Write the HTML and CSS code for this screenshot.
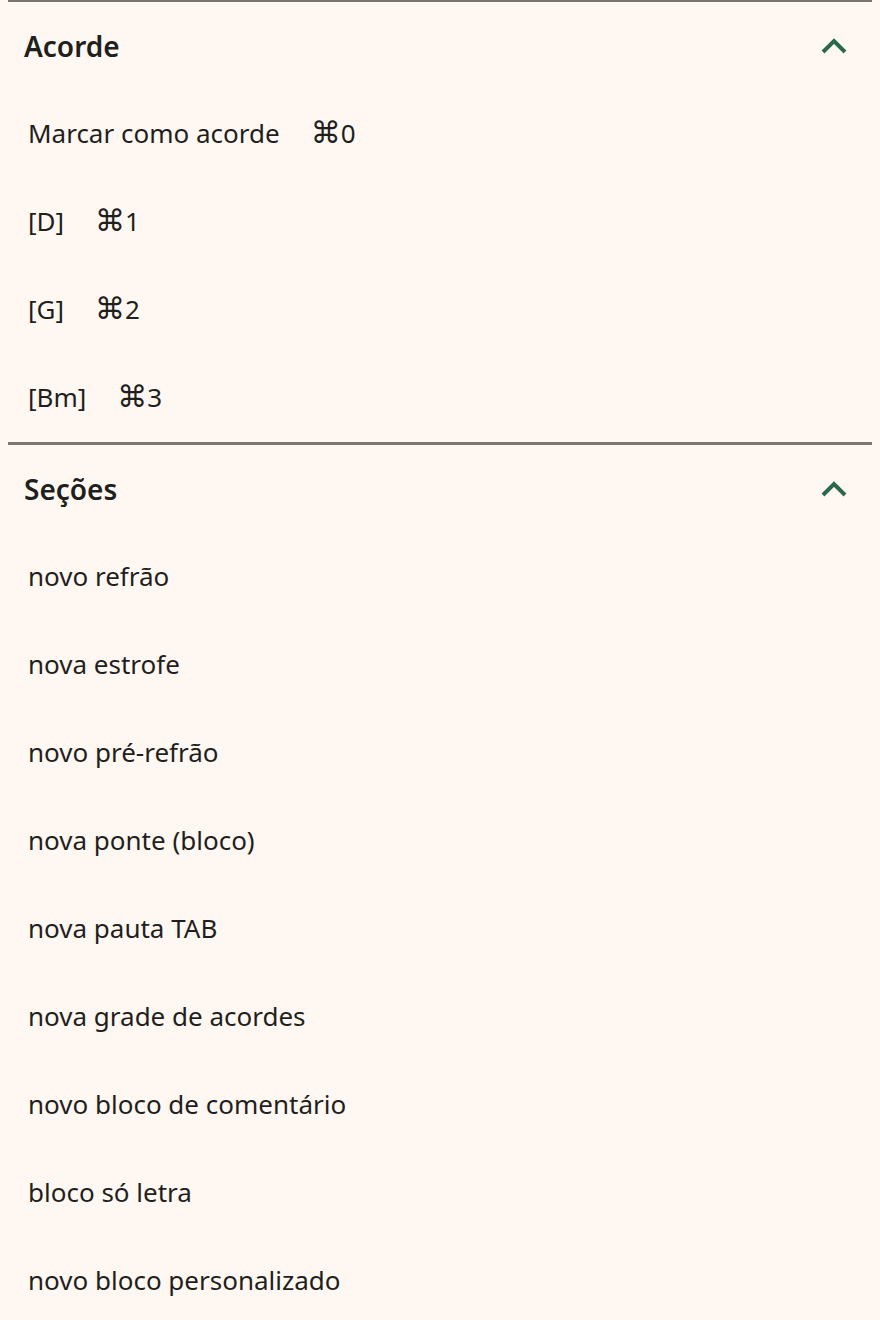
FILE: index.html
```html
<!DOCTYPE html>
<html lang="pt-BR">
<head>
    <meta charset="UTF-8">
    <meta name="viewport" content="width=device-width, initial-scale=1.0">
    <title>Inserir</title>
    <link rel="stylesheet" href="styles.css">
</head>
<body>
    <div class="panel">
        <section class="group">
            <div class="group-header">
                <h2>Acorde</h2>
                <svg class="chevron" width="28" height="18" viewBox="0 0 28 18">
                    <polyline points="3,15 14,4 25,15" />
                </svg>
            </div>
            <ul class="items">
                <li><span>Marcar como acorde</span><span class="shortcut"><span class="cmd">⌘</span>0</span></li>
                <li><span>[D]</span><span class="shortcut"><span class="cmd">⌘</span>1</span></li>
                <li><span>[G]</span><span class="shortcut"><span class="cmd">⌘</span>2</span></li>
                <li><span>[Bm]</span><span class="shortcut"><span class="cmd">⌘</span>3</span></li>
            </ul>
        </section>

        <section class="group">
            <div class="group-header">
                <h2>Seções</h2>
                <svg class="chevron" width="28" height="18" viewBox="0 0 28 18">
                    <polyline points="3,15 14,4 25,15" />
                </svg>
            </div>
            <ul class="items">
                <li><span>novo refrão</span></li>
                <li><span>nova estrofe</span></li>
                <li><span>novo pré-refrão</span></li>
                <li><span>nova ponte (bloco)</span></li>
                <li><span>nova pauta TAB</span></li>
                <li><span>nova grade de acordes</span></li>
                <li><span>novo bloco de comentário</span></li>
                <li><span>bloco só letra</span></li>
                <li><span>novo bloco personalizado</span></li>
            </ul>
        </section>
    </div>
</body>
</html>
```

FILE: styles.css
```css
body {
    font-family: "Noto Sans", "DejaVu Sans", sans-serif;
    margin: 0;
    padding: 0 8px;
    background-color: #fff8f2;
    color: #1f1f1d;
}

.panel {
    margin-top: -1px;
}

.group {
    border-top: 3px solid #7c766f;
}

.group-header {
    display: flex;
    justify-content: space-between;
    align-items: center;
    height: 88px;
    padding: 0 24px 0 16px;
}

.group-header h2 {
    margin: 0;
    font-size: 28px;
    font-weight: 600;
}

.chevron polyline {
    fill: none;
    stroke: #2a6a4b;
    stroke-width: 4;
}

.items {
    list-style: none;
    margin: 0;
    padding: 0;
}

.items li {
    display: flex;
    align-items: center;
    gap: 31px;
    height: 85px;
    padding: 0 0 3px 20px;
    font-size: 26px;
}

.shortcut {
    display: flex;
    align-items: center;
}

.shortcut .cmd {
    font-family: "DejaVu Sans", sans-serif;
    font-size: 30px;
    line-height: 1;
}
```
